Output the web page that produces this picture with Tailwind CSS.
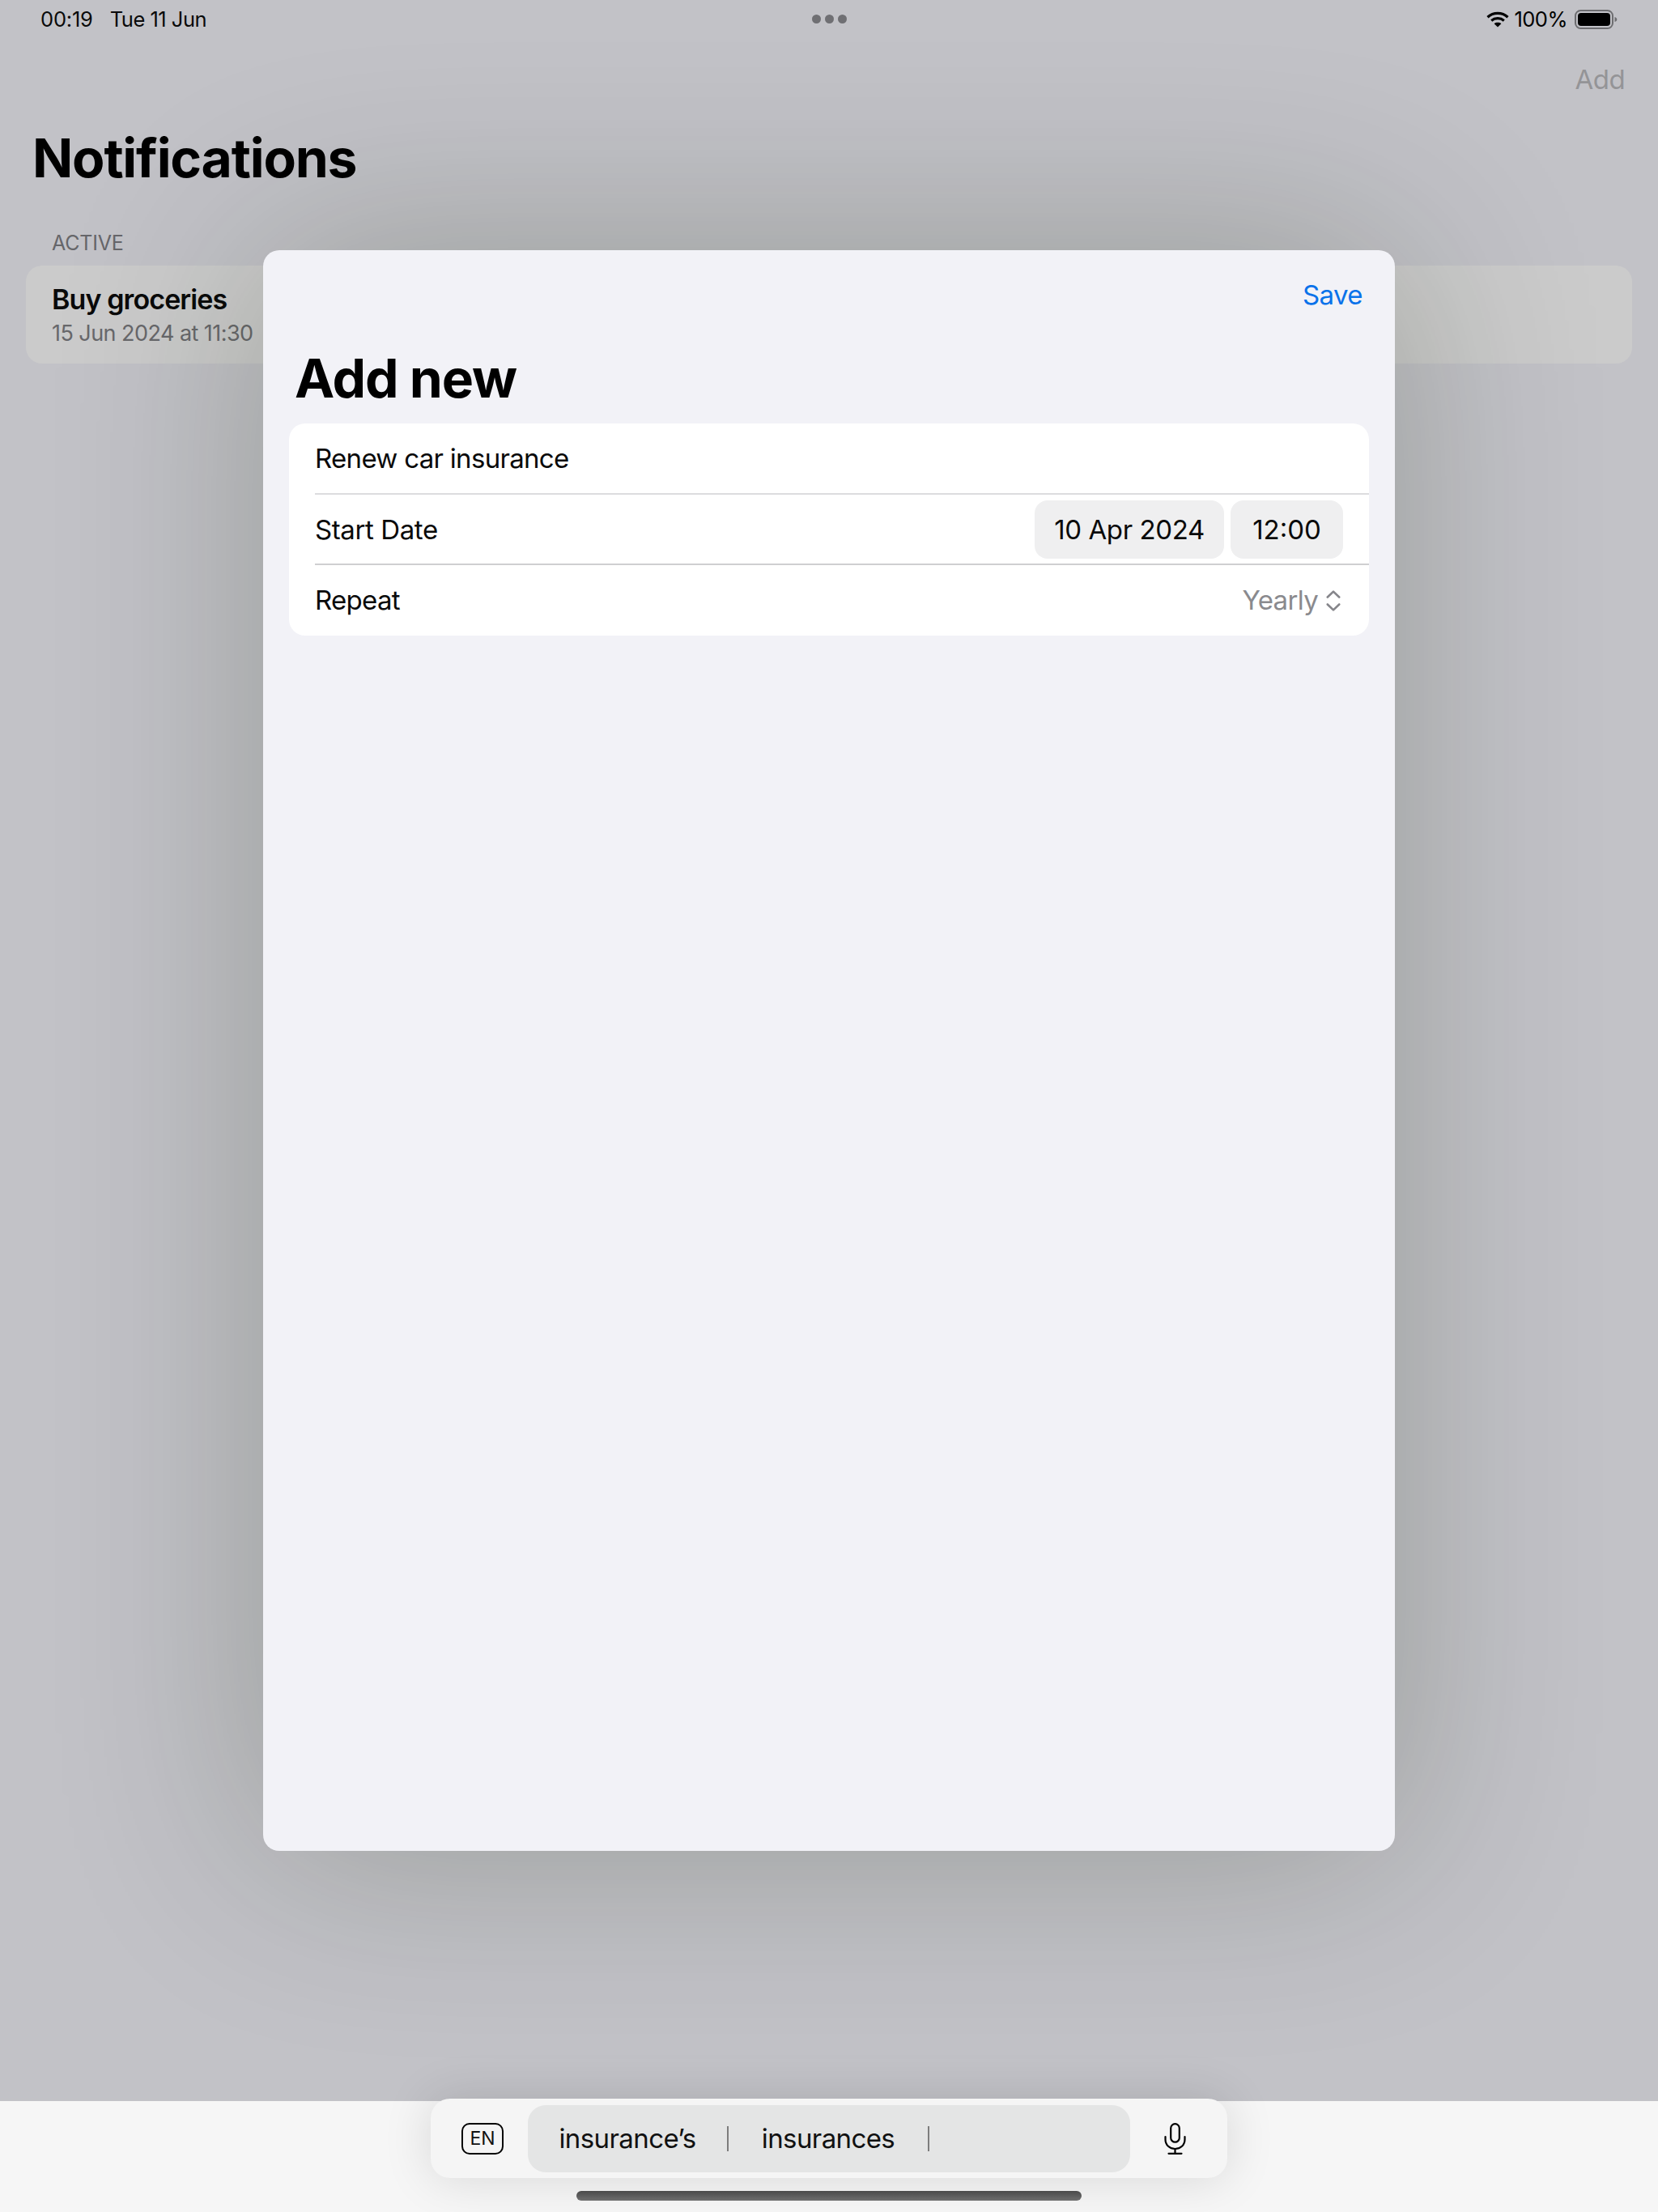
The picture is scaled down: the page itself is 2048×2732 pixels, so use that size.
<!doctype html>
<html>
<head>
  <meta charset="UTF-8">
  <meta name="viewport" content="width=device-width, initial-scale=1.0">
  <script src="https://cdn.jsdelivr.net/npm/@tailwindcss/browser@4"></script>
</head>
<body class="font-['Inter','Liberation_Sans',sans-serif] text-black">
  <div class="relative w-[2048px] h-[2732px] overflow-hidden flex flex-col bg-[#c2c2c7]">

    <!-- status bar -->
    <div class="h-[48px] px-[50px] flex items-center justify-between text-[25.5px] tracking-[-0.2px] relative">
      <div class="flex gap-[21px] text-[#0a0a0a]">
        <span>00:19</span>
        <span class="tracking-[-0.5px]">Tue 11 Jun</span>
      </div>
      <div class="absolute left-[1003px] top-[18px] flex gap-[5px]">
        <div class="w-[11px] h-[11px] rounded-full bg-[#6f6f73]"></div>
        <div class="w-[11px] h-[11px] rounded-full bg-[#6f6f73]"></div>
        <div class="w-[11px] h-[11px] rounded-full bg-[#6f6f73]"></div>
      </div>
      <div class="flex items-center gap-[6px]">
        <svg width="28" height="20" viewBox="0 0 28 20" fill="none" stroke="#000" stroke-width="3.2">
          <path d="M1.5 7.2C8.5 .8 19.5 .8 26.5 7.2"/>
          <path d="M6.2 11.4C10.6 7.8 17.4 7.8 21.8 11.4"/>
          <path d="M14 19.5 9.6 15.2C12 13.4 16 13.4 18.4 15.2Z" fill="#000" stroke="none"/>
        </svg>
        <span class="tracking-[-0.5px]">100%</span>
        <svg class="ml-[3px]" width="53" height="24" viewBox="0 0 53 24">
          <rect x="1" y="1" width="46" height="22" rx="6.5" fill="none" stroke="#6d6d70" stroke-width="2"/>
          <rect x="4" y="4" width="40" height="16" rx="4" fill="#000"/>
          <path d="M49.5 9c1.8.5 2.8 1.5 2.8 3s-1 2.5-2.8 3Z" fill="#6d6d70"/>
        </svg>
      </div>
    </div>

    <!-- notifications behind the sheet -->
    <div class="flex justify-end pr-[41px] pt-[30px] text-[33px] leading-[40px] text-[#949497] tracking-[-0.6px]">Add</div>
    <h1 class="ml-[40px] mt-[37px] text-[66px] leading-[80px] font-bold tracking-[-1.2px]">Notifications</h1>
    <div class="ml-[64px] mt-[49px] text-[25px] leading-[32px] text-[#66666a] tracking-[-0.2px]">ACTIVE</div>
    <div class="mx-[32px] mt-[12px] h-[121px] rounded-[20px] bg-[#cbcbcb] pl-[32px] pt-[22px]">
      <div class="text-[34px] leading-[40px] font-semibold tracking-[-0.9px] text-[#0a0a0a]">Buy groceries</div>
      <div class="mt-[5px] text-[27px] leading-[34px] text-[#68686b] tracking-[-0.55px]">15 Jun 2024 at 11:30</div>
    </div>

    <!-- keyboard shortcut bar -->
    <div class="mt-auto h-[137px] bg-[#f6f6f6] relative">
      <div class="absolute left-[532px] -top-[3px] w-[984px] h-[98px] rounded-[24px] bg-[#f5f5f5] shadow-[0_0_60px_rgba(0,0,0,0.13)] flex items-center">
        <div class="w-[120px] pl-[8px] flex justify-center">
          <div class="w-[52px] h-[39px] rounded-[10px] border-[2px] border-black flex items-center justify-center text-[23px] leading-none text-[#111]">EN</div>
        </div>
        <div class="w-[744px] h-[83px] rounded-[22px] bg-[#e4e5e5] flex items-center text-[33px] tracking-[-0.6px] text-[#111]">
          <div class="w-[246px] pt-[2px] text-center">insurance’s</div>
          <div class="w-[2px] h-[31px] bg-[#7d7d7d]"></div>
          <div class="w-[246px] pt-[2px] text-center">insurances</div>
          <div class="w-[2px] h-[31px] bg-[#7d7d7d]"></div>
        </div>
        <div class="flex-1 pr-[10px] flex justify-center">
          <svg width="27" height="39" viewBox="0 0 27 39" fill="none" stroke="#000" stroke-width="2.2" stroke-linecap="round">
            <rect x="8.2" y="1.2" width="10.6" height="22.5" rx="5.3"/>
            <path d="M1.5 17v3.5C1.5 27.2 6.8 32 13.5 32s12-4.8 12-11.5V17"/>
            <path d="M13.5 32v5.8M5.5 37.8h16"/>
          </svg>
        </div>
      </div>
      <div class="absolute left-[712px] top-[111px] w-[624px] h-[12px] rounded-full bg-gradient-to-b from-[#4a4a4a] to-[#6f6f6f]"></div>
    </div>

    <!-- add new sheet -->
    <div class="absolute left-[325px] top-[309px] w-[1398px] h-[1977px] rounded-[20px] bg-[#f2f2f7] shadow-[0_0_400px_rgba(17,30,0,0.24)] px-[32px]">
      <div class="pt-[35px] pr-[8px] text-right text-[33px] leading-[40px] text-[#0a72ea] tracking-[-0.6px]">Save</div>
      <h2 class="ml-[7px] mt-[43px] text-[66px] leading-[80px] font-bold tracking-[-1.2px]">Add new</h2>
      <div class="mt-[16px] rounded-[20px] bg-white text-[33px] tracking-[-0.7px]">
        <div class="h-[88px] ml-[32px] pt-[2px] flex items-center text-[#0a0a0a] border-b-[2px] border-[#dcdcde]">Renew car insurance</div>
        <div class="h-[87px] ml-[32px] pr-[32px] flex items-center justify-between border-b-[2px] border-[#cfcfd1]">
          <span class="pt-[2px] tracking-[-0.4px] text-[#0a0a0a]">Start Date</span>
          <div class="flex gap-[8px] text-[#0a0a0a] tracking-[-0.4px]">
            <div class="w-[234px] h-[72px] pt-[2px] rounded-[16px] bg-[#efeff0] flex items-center justify-center">10 Apr 2024</div>
            <div class="w-[139px] h-[72px] pt-[2px] rounded-[16px] bg-[#efeff0] flex items-center justify-center tracking-[0px]">12:00</div>
          </div>
        </div>
        <div class="h-[87px] ml-[32px] pr-[35px] flex items-center justify-between">
          <span class="text-[#0a0a0a]">Repeat</span>
          <div class="flex items-center gap-[10px] text-[#8a8a8e]">
            <span>Yearly</span>
            <svg width="18" height="26" viewBox="0 0 18 26" fill="none" stroke="#85858a" stroke-width="2.6" stroke-linecap="round" stroke-linejoin="round">
              <path d="M1.8 8.5 9 1.6l7.2 6.9"/>
              <path d="M1.8 17.5 9 24.4l7.2-6.9"/>
            </svg>
          </div>
        </div>
      </div>
    </div>
  </div>
</body>
</html>
